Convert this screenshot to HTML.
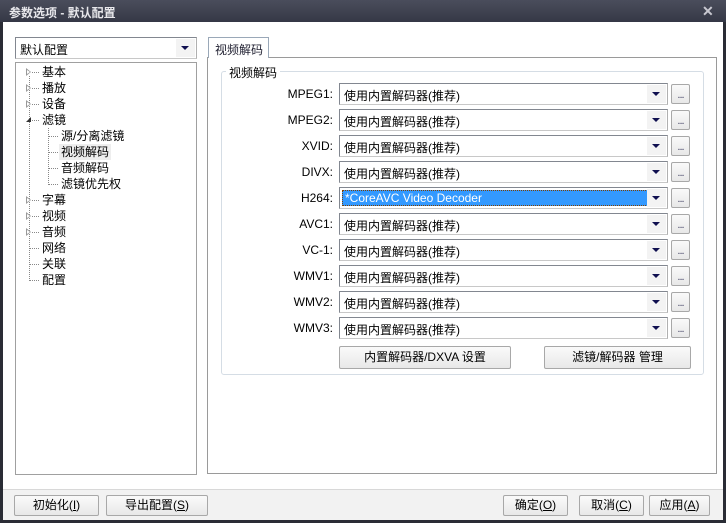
<!DOCTYPE html><html><head><meta charset="utf-8"><style>
*{box-sizing:border-box;margin:0;padding:0}
body{width:726px;height:523px;background:#2a2c35;font-family:"Liberation Sans","Noto Sans CJK SC",sans-serif;font-size:12px;color:#000;position:relative;overflow:hidden}
.a{position:absolute}
#title{left:0;top:0;width:726px;height:22px;background:linear-gradient(#4a4d5c,#353846);color:#e8e8ec;font-weight:bold;font-size:12px;padding:4px 0 0 9px}
#win{left:3px;top:22px;width:720px;height:498px;background:#fff}
#strip{left:3px;top:489px;width:720px;height:31px;background:#f2f2f2;border-top:1px solid #d8d8d8}
.box{border:1px solid #a0a0a0;background:#fff}
.dd{border:1px solid #828790;border-right-color:#b0b0b0;border-bottom-color:#c8c8c8;background:#fff;height:22px;padding:3px 0 0 4px;white-space:nowrap}
.arr{position:absolute;right:1px;top:1px;width:19px;height:18px;background:#f3f3f3}
.arr:after{content:"";position:absolute;left:5px;top:7px;border-left:4px solid transparent;border-right:4px solid transparent;border-top:4px solid #101050}
.btn{border:1px solid #a8a8a8;background:linear-gradient(#fafafa,#e8e8e8);text-align:center;border-radius:2px}
.lb{width:80px;text-align:right;left:253px}
.dots{width:19px;height:20px;left:671px;font-size:11px;line-height:20px;color:#446;letter-spacing:-1px}
.ti{position:absolute;font-size:12px;line-height:16px;white-space:nowrap}
.tri{position:absolute;width:0;height:0;border-top:4px solid transparent;border-bottom:4px solid transparent;border-left:5px solid #999}
.tri:after{content:"";position:absolute;left:-4px;top:-2px;border-top:2px solid transparent;border-bottom:2px solid transparent;border-left:3px solid #fff}
.hd{position:absolute;width:7px;border-top:1px dotted #888}
</style></head><body>
<div class="a" id="title">参数选项 - 默认配置</div>
<div class="a" style="left:702px;top:3px;color:#c8c8d0;font-size:14px;font-weight:bold">✕</div>
<div class="a" id="win"></div>
<div class="a" id="strip"></div>

<div class="a dd" style="left:15px;top:37px;width:182px;height:22px">默认配置<div class="arr"></div></div>
<div class="a box" style="left:15px;top:62px;width:182px;height:413px"></div>
<div class="a" style="left:29px;top:76px;width:1px;height:205px;border-left:1px dotted #888"></div>
<div class="a" style="left:48px;top:128px;width:1px;height:57px;border-left:1px dotted #888"></div>

<div class="tri" style="left:26px;top:68px"></div><div class="hd" style="left:32px;top:72px"></div><div class="ti" style="left:42px;top:64px">基本</div>
<div class="tri" style="left:26px;top:84px"></div><div class="hd" style="left:32px;top:88px"></div><div class="ti" style="left:42px;top:80px">播放</div>
<div class="tri" style="left:26px;top:100px"></div><div class="hd" style="left:32px;top:104px"></div><div class="ti" style="left:42px;top:96px">设备</div>
<div class="a" style="left:26px;top:117px;width:0;height:0;border-left:5px solid transparent;border-bottom:5px solid #333"></div><div class="hd" style="left:32px;top:120px"></div><div class="ti" style="left:42px;top:112px">滤镜</div>
<div class="hd" style="left:49px;top:136px;width:9px"></div><div class="ti" style="left:61px;top:128px">源/分离滤镜</div>
<div class="hd" style="left:49px;top:152px;width:9px"></div><div class="ti" style="left:59px;top:144px;background:#eee;padding:0 2px">视频解码</div>
<div class="hd" style="left:49px;top:168px;width:9px"></div><div class="ti" style="left:61px;top:160px">音频解码</div>
<div class="hd" style="left:49px;top:184px;width:9px"></div><div class="ti" style="left:61px;top:176px">滤镜优先权</div>
<div class="tri" style="left:26px;top:196px"></div><div class="hd" style="left:32px;top:200px"></div><div class="ti" style="left:42px;top:192px">字幕</div>
<div class="tri" style="left:26px;top:212px"></div><div class="hd" style="left:32px;top:216px"></div><div class="ti" style="left:42px;top:208px">视频</div>
<div class="tri" style="left:26px;top:228px"></div><div class="hd" style="left:32px;top:232px"></div><div class="ti" style="left:42px;top:224px">音频</div>
<div class="hd" style="left:30px;top:248px;width:9px"></div><div class="ti" style="left:42px;top:240px">网络</div>
<div class="hd" style="left:30px;top:264px;width:9px"></div><div class="ti" style="left:42px;top:256px">关联</div>
<div class="hd" style="left:30px;top:280px;width:9px"></div><div class="ti" style="left:42px;top:272px">配置</div>

<div class="a box" style="left:207px;top:57px;width:510px;height:417px;border-color:#9a9a9a"></div>
<div class="a" style="left:208px;top:37px;width:61px;height:21px;border:1px solid #9aa8b8;border-bottom:none;background:#fff;padding:3px 0 0 6px;color:#223">视频解码</div>
<div class="a" style="left:221px;top:71px;width:483px;height:304px;border:1px solid #d5dde5;border-radius:3px"></div>
<div class="a" style="left:226px;top:64px;background:#fff;padding:0 3px">视频解码</div>

<div class="a lb" style="top:87px">MPEG1:</div><div class="a dd" style="left:339px;top:83px;width:329px">使用内置解码器(推荐)<div class="arr"></div></div><div class="a btn dots" style="top:84px">...</div>
<div class="a lb" style="top:113px">MPEG2:</div><div class="a dd" style="left:339px;top:109px;width:329px">使用内置解码器(推荐)<div class="arr"></div></div><div class="a btn dots" style="top:110px">...</div>
<div class="a lb" style="top:139px">XVID:</div><div class="a dd" style="left:339px;top:135px;width:329px">使用内置解码器(推荐)<div class="arr"></div></div><div class="a btn dots" style="top:136px">...</div>
<div class="a lb" style="top:165px">DIVX:</div><div class="a dd" style="left:339px;top:161px;width:329px">使用内置解码器(推荐)<div class="arr"></div></div><div class="a btn dots" style="top:162px">...</div>
<div class="a lb" style="top:191px">H264:</div><div class="a dd" style="left:339px;top:187px;width:329px;padding:2px"><div style="background:#3399ff;color:#fff;border:1px dotted #804000;height:16px;width:306px;padding-left:2px;line-height:14px">*CoreAVC Video Decoder</div><div class="arr"></div></div><div class="a btn dots" style="top:188px">...</div>
<div class="a lb" style="top:217px">AVC1:</div><div class="a dd" style="left:339px;top:213px;width:329px">使用内置解码器(推荐)<div class="arr"></div></div><div class="a btn dots" style="top:214px">...</div>
<div class="a lb" style="top:243px">VC-1:</div><div class="a dd" style="left:339px;top:239px;width:329px">使用内置解码器(推荐)<div class="arr"></div></div><div class="a btn dots" style="top:240px">...</div>
<div class="a lb" style="top:269px">WMV1:</div><div class="a dd" style="left:339px;top:265px;width:329px">使用内置解码器(推荐)<div class="arr"></div></div><div class="a btn dots" style="top:266px">...</div>
<div class="a lb" style="top:295px">WMV2:</div><div class="a dd" style="left:339px;top:291px;width:329px">使用内置解码器(推荐)<div class="arr"></div></div><div class="a btn dots" style="top:292px">...</div>
<div class="a lb" style="top:321px">WMV3:</div><div class="a dd" style="left:339px;top:317px;width:329px">使用内置解码器(推荐)<div class="arr"></div></div><div class="a btn dots" style="top:318px">...</div>

<div class="a btn" style="left:339px;top:346px;width:172px;height:23px;line-height:21px">内置解码器/DXVA 设置</div>
<div class="a btn" style="left:544px;top:346px;width:147px;height:23px;line-height:21px">滤镜/解码器 管理</div>

<div class="a btn" style="left:14px;top:495px;width:85px;height:21px;line-height:19px">初始化(<u>I</u>)</div>
<div class="a btn" style="left:106px;top:495px;width:102px;height:21px;line-height:19px">导出配置(<u>S</u>)</div>
<div class="a btn" style="left:503px;top:495px;width:65px;height:21px;line-height:19px">确定(<u>O</u>)</div>
<div class="a btn" style="left:579px;top:495px;width:65px;height:21px;line-height:19px">取消(<u>C</u>)</div>
<div class="a btn" style="left:649px;top:495px;width:61px;height:21px;line-height:19px">应用(<u>A</u>)</div>
</body></html>
